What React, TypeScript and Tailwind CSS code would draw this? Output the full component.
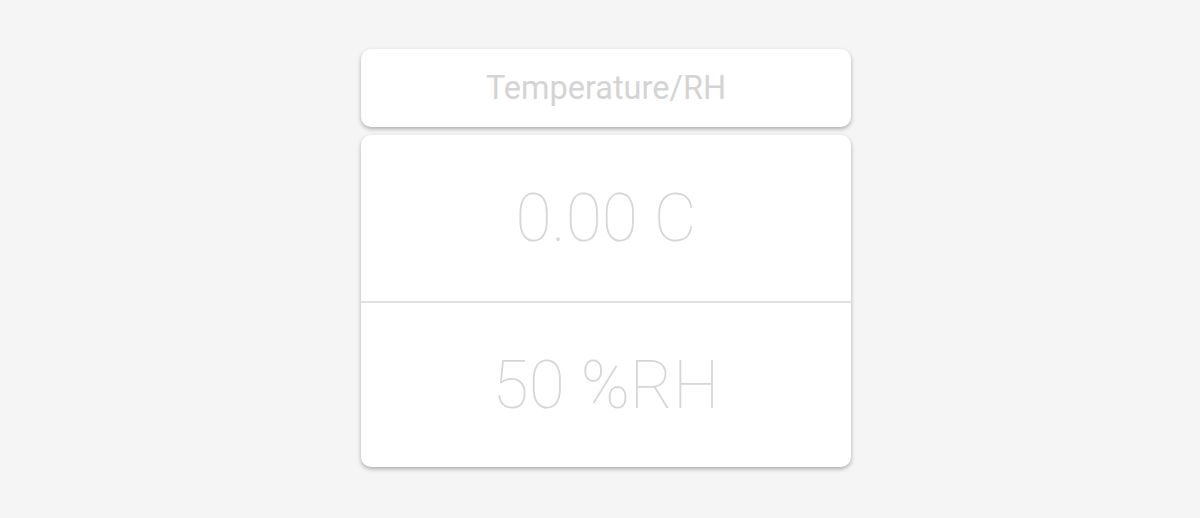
import React from 'react';

const App: React.FC = () => {
    return (
        <div className="min-h-[518px] w-full bg-[#f5f5f5] flex justify-center pt-[49px] pl-3" style={{ fontFamily: 'Roboto, "Liberation Sans", sans-serif' }}>
            <div className="w-[490px] flex flex-col gap-2">
                <div className="h-[78px] bg-white rounded-[10px] shadow-[0_2px_4px_rgba(0,0,0,0.3)] flex items-center justify-center">
                    <span className="text-[32.5px] text-[#d4d4d4]">Temperature/RH</span>
                </div>
                <div className="bg-white rounded-[10px] shadow-[0_2px_4px_rgba(0,0,0,0.3)] flex flex-col">
                    <div className="h-[168px] flex items-center justify-center border-b-2 border-[#e0e0e0]">
                        <span className="text-[66px] font-thin text-[#d6d6d6]">0.00 C</span>
                    </div>
                    <div className="h-[164px] flex items-center justify-center">
                        <span className="text-[66px] font-thin text-[#d6d6d6]">50 %RH</span>
                    </div>
                </div>
            </div>
        </div>
    );
};

export default App;
